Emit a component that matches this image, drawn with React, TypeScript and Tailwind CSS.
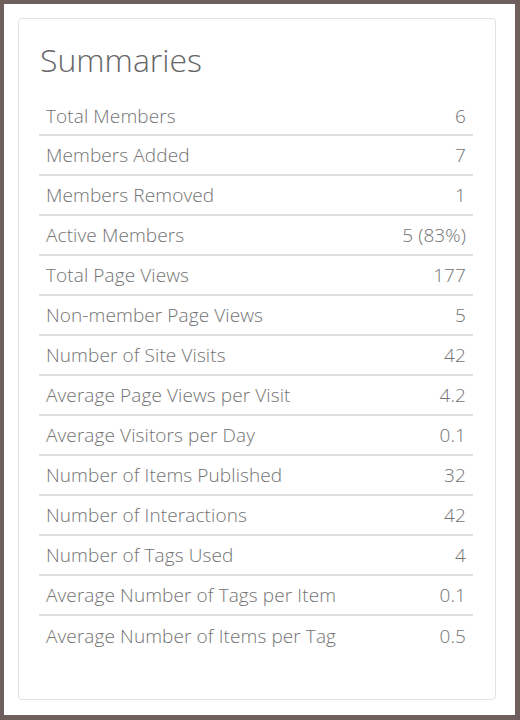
import React from "react";

const rows: [string, string][] = [
  ["Total Members", "6"],
  ["Members Added", "7"],
  ["Members Removed", "1"],
  ["Active Members", "5 (83%)"],
  ["Total Page Views", "177"],
  ["Non-member Page Views", "5"],
  ["Number of Site Visits", "42"],
  ["Average Page Views per Visit", "4.2"],
  ["Average Visitors per Day", "0.1"],
  ["Number of Items Published", "32"],
  ["Number of Interactions", "42"],
  ["Number of Tags Used", "4"],
  ["Average Number of Tags per Item", "0.1"],
  ["Average Number of Items per Tag", "0.5"],
];

export default function App() {
  return (
    <div
      className="w-[520px] h-[720px] border-[#6e5f5c] border-t-4 border-l-4 border-r-[5px] border-b-[5px] bg-white pt-[14px] pl-[14px]"
      style={{ fontFamily: '"Open Sans", "Liberation Sans", sans-serif' }}
    >
      <div className="w-[478px] h-[682px] border border-[#e2e2e2] rounded-[4px] bg-white pt-[21px] pl-[20px] pr-[22px]">
        <h1 className="text-[32px] leading-[40px] font-light text-[#666] pl-[1px]">
          Summaries
        </h1>
        <div className="mt-[18px] divide-y-2 divide-[#e0e0e0]">
          {rows.map(([label, value]) => (
            <div
              key={label}
              className="flex items-center justify-between h-[40px] first:h-[38px] px-[7px] text-[19px] font-light tracking-[0.1px] text-[#737373]"
            >
              <span>{label}</span>
              <span>{value}</span>
            </div>
          ))}
        </div>
      </div>
    </div>
  );
}
